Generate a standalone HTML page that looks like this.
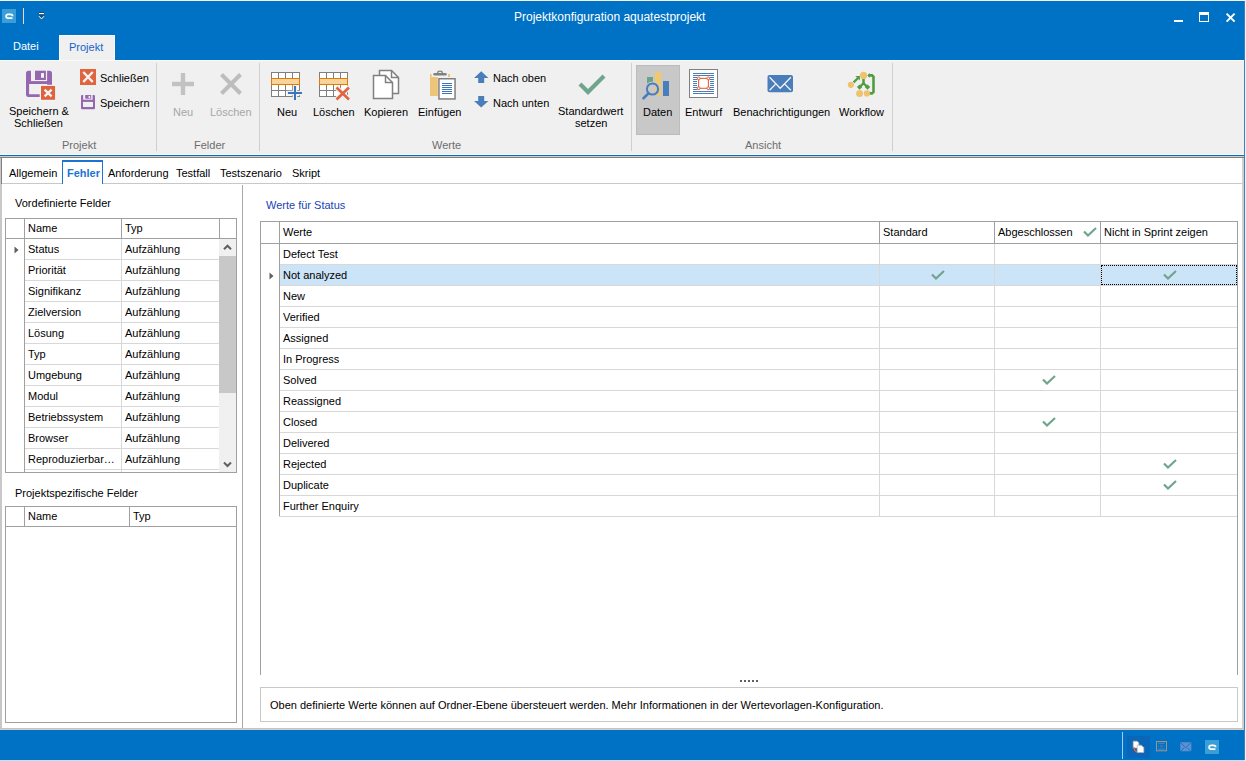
<!DOCTYPE html>
<html><head><meta charset="utf-8">
<style>
*{box-sizing:border-box}
html,body{margin:0;padding:0}
body{width:1246px;height:761px;overflow:hidden;position:relative;background:#fff;font-family:"Liberation Sans",sans-serif;font-size:11px;color:#000}
.a{position:absolute}
.t{position:absolute;white-space:nowrap;line-height:13px;font-size:11px}
.hl{position:absolute;height:1px}
.vl{position:absolute;width:1px}
svg{position:absolute;overflow:visible}
</style></head><body>
<!-- top strip -->
<div class="a" style="left:0;top:0;width:1246px;height:1px;background:#f7f2ee"></div>
<!-- title bar -->
<div class="a" style="left:0;top:1px;width:1244px;height:59px;background:#0072c6"></div>
<div class="a" style="left:2px;top:9px;width:14px;height:14px;background:#3a9fd6"></div>
<svg style="left:2px;top:9px" width="14" height="14" viewBox="0 0 14 14"><path d="M10.6 7.2 C10.6 5.6 10 5.3 8.5 5.3 H6.2 C4.8 5.3 4.1 6 4.1 7.3 C4.1 8.6 4.8 9.2 6.2 9.2 H10.4" fill="none" stroke="#fff" stroke-width="1.7"/></svg>
<div class="a" style="left:23px;top:8px;width:1px;height:16px;background:#e3dad2"></div>
<div class="a" style="left:39px;top:12px;width:5px;height:1px;background:#404040"></div>
<div class="a" style="left:39px;top:13px;width:5px;height:1px;background:#fff"></div>
<svg style="left:38px;top:15px" width="7" height="5" viewBox="0 0 7 5"><path d="M1 0H6L3.5 3Z" fill="#404040"/><path d="M1 1.2L3.5 3.9L6 1.2" fill="none" stroke="#fff" stroke-width="1"/></svg>
<div class="t" style="left:514px;top:10px;font-size:12px;line-height:14px;color:#fff">Projektkonfiguration aquatestprojekt</div>
<div class="a" style="left:1174px;top:20px;width:9px;height:2px;background:#fff"></div>
<div class="a" style="left:1199px;top:12px;width:10px;height:10px;border:1px solid #fff;border-top-width:3px"></div>
<svg style="left:1226px;top:13px" width="9" height="9" viewBox="0 0 9 9"><path d="M0.6 0.6L8.6 8.6M8.6 0.6L0.6 8.6" stroke="#fff" stroke-width="2"/></svg>
<!-- ribbon tabs -->
<div class="t" style="left:13px;top:40px;color:#fff">Datei</div>
<div class="a" style="left:59px;top:35px;width:56px;height:25px;background:#f0f0f0;border:1px solid #fcfaf7;border-bottom:none"></div>
<div class="t" style="left:69px;top:41px;color:#1464cc">Projekt</div>
<!-- ribbon body -->
<div class="a" style="left:0;top:60px;width:1244px;height:94px;background:#f0f0f0;border-top:1px solid #fcfaf7"></div>
<div class="hl" style="left:0;top:154px;width:1244px;background:#fffaf5"></div>
<div class="hl" style="left:0;top:155px;width:1244px;background:#0072c6"></div>
<div class="hl" style="left:0;top:156px;width:1244px;background:#d4d0c8"></div>
<div class="hl" style="left:0;top:157px;width:1244px;background:#808080"></div>

<!-- ===== RIBBON CONTENT ===== -->
<!-- separators -->
<div class="vl" style="left:156px;top:63px;height:88px;background:#cfcfcf"></div>
<div class="vl" style="left:259px;top:63px;height:88px;background:#cfcfcf"></div>
<div class="vl" style="left:631px;top:63px;height:88px;background:#cfcfcf"></div>
<div class="vl" style="left:892px;top:63px;height:88px;background:#cfcfcf"></div>
<!-- group labels -->
<div class="t" style="left:62px;top:139px;color:#6d6d6d">Projekt</div>
<div class="t" style="left:194px;top:139px;color:#6d6d6d">Felder</div>
<div class="t" style="left:432px;top:139px;color:#6d6d6d">Werte</div>
<div class="t" style="left:745px;top:139px;color:#6d6d6d">Ansicht</div>
<!-- Speichern & Schliessen big -->
<svg style="left:26px;top:70px" width="30" height="30" viewBox="0 0 30 30">
 <g fill="#9467b0">
  <path d="M0 3.2Q0 0.7 2.5 0.7H5V11.2H3.1V24.2H13.7V27H2.5Q0 27 0 24.5Z"/>
  <rect x="9" y="0.7" width="10.9" height="9.3"/>
  <path d="M21.1 0.7H23.5Q26 0.7 26 3.2V14.7H21.1Z"/>
  <rect x="0" y="11.1" width="26" height="2.9"/>
 </g>
 <rect x="15" y="3.1" width="3" height="4.7" fill="#f4f4f4"/>
 <rect x="14.2" y="15" width="15.6" height="15.6" fill="#f8f8f8"/>
 <rect x="15" y="15.9" width="14.1" height="13.9" fill="#de623e"/>
 <path d="M18.6 19.6L25.6 26.4M25.6 19.6L18.6 26.4" stroke="#f4f4f4" stroke-width="2.3"/>
</svg>
<div class="t" style="left:9px;top:105px">Speichern &amp;</div>
<div class="t" style="left:14px;top:117px">Schließen</div>
<!-- small Schliessen -->
<svg style="left:80px;top:69px" width="16" height="16" viewBox="0 0 16 16">
 <rect width="16" height="16" fill="#e0643f"/>
 <path d="M3.3 3L12.7 13M12.7 3L3.3 13" stroke="#f4f4f4" stroke-width="2.4"/>
</svg>
<div class="t" style="left:100px;top:72px">Schließen</div>
<!-- small Speichern -->
<svg style="left:81px;top:95px" width="14" height="15" viewBox="0 0 14 15">
 <g fill="#9467b0">
  <path d="M0 1Q0 0 1 0H2.2V4.7H2V12H12V6.9H11.6V0H13Q14 0 14 1V13.2Q14 14.2 13 14.2H1Q0 14.2 0 13.2Z"/>
  <rect x="4.2" y="0" width="6" height="3.7"/>
  <rect x="0" y="4.7" width="14" height="2.2"/>
 </g>
 <rect x="7.6" y="0.9" width="1.6" height="2.2" fill="#f4f4f4"/>
</svg>
<div class="t" style="left:100px;top:97px">Speichern</div>
<!-- Felder: Neu / Loeschen disabled -->
<svg style="left:172px;top:73px" width="22" height="22" viewBox="0 0 22 22">
 <path d="M11 0V22M0 11H22" stroke="#c2c2c2" stroke-width="4.4"/>
</svg>
<div class="t" style="left:173px;top:106px;color:#a6a6a6">Neu</div>
<svg style="left:220px;top:73px" width="22" height="22" viewBox="0 0 22 22">
 <path d="M1.5 1.5L20.5 20.5M20.5 1.5L1.5 20.5" stroke="#bdbdbd" stroke-width="4"/>
</svg>
<div class="t" style="left:210px;top:106px;color:#a6a6a6">Löschen</div>
<!-- Werte: Neu table -->
<svg style="left:271px;top:72px" width="32" height="29" viewBox="0 0 32 29">
 <g stroke="#7f7f7f" stroke-width="1" fill="#fff">
  <rect x="0.5" y="0.5" width="28" height="24"/>
 </g>
 <path d="M7.5 0.5V25M14.5 0.5V25M21.5 0.5V25M0.5 18.5H29" stroke="#7f7f7f" stroke-width="1" fill="none"/>
 <rect x="0.5" y="6.5" width="28" height="6" fill="#f8d49a" stroke="#e07b00" stroke-width="1"/>
 <path d="M24 13V29M16 21H32" stroke="#f0f0f0" stroke-width="4.5"/>
 <path d="M24 14V28M17 21H31" stroke="#3a76ba" stroke-width="2"/>
</svg>
<div class="t" style="left:277px;top:106px">Neu</div>
<!-- Werte: Loeschen table -->
<svg style="left:319px;top:72px" width="32" height="29" viewBox="0 0 32 29">
 <rect x="0.5" y="0.5" width="28" height="24" stroke="#7f7f7f" fill="#fff"/>
 <path d="M7.5 0.5V25M14.5 0.5V25M21.5 0.5V25M0.5 18.5H29" stroke="#7f7f7f" stroke-width="1" fill="none"/>
 <rect x="0.5" y="6.5" width="28" height="6" fill="#f8d49a" stroke="#e07b00" stroke-width="1"/>
 <path d="M17 15L30.5 28M30.5 15L17 28" stroke="#f0f0f0" stroke-width="5"/>
 <path d="M17.5 15.5L30 27.5M30 15.5L17.5 27.5" stroke="#e0643f" stroke-width="2.6"/>
</svg>
<div class="t" style="left:313px;top:106px">Löschen</div>
<!-- Kopieren -->
<svg style="left:372px;top:69px" width="28" height="31" viewBox="0 0 28 31">
 <path d="M7.5 1.5H19.5L26.5 8.5V24.5H7.5Z" fill="#fff" stroke="#808080" stroke-width="1.5"/>
 <path d="M19.5 1.5V8.5H26.5" fill="none" stroke="#808080" stroke-width="1.5"/>
 <path d="M1.5 6.5H13.5L20.5 13.5V29.5H1.5Z" fill="#fff" stroke="#808080" stroke-width="1.5"/>
 <path d="M13.5 6.5V13.5H20.5" fill="none" stroke="#808080" stroke-width="1.5"/>
</svg>
<div class="t" style="left:364px;top:106px">Kopieren</div>
<!-- Einfuegen -->
<svg style="left:429px;top:70px" width="29" height="31" viewBox="0 0 29 31">
 <rect x="1" y="4" width="1.6" height="22" fill="#edc579"/>
 <rect x="1" y="7" width="7.8" height="19" fill="#edc579"/>
 <rect x="19" y="4" width="2" height="3" fill="#edc579"/>
 <path d="M5.5 4.3H16.5" stroke="#808080" stroke-width="2.4" stroke-linecap="round"/>
 <ellipse cx="11" cy="2.6" rx="2.3" ry="1.4" fill="none" stroke="#808080" stroke-width="1.3"/>
 <rect x="9.95" y="8.75" width="16.1" height="20.2" fill="#fff" stroke="#808080" stroke-width="1.5"/>
 <path d="M13 13.5H23M13 15.5H23M13 17.5H23M13 19.5H23M13 21.5H23M13 23.5H23" stroke="#3a76ba" stroke-width="1"/>
</svg>
<div class="t" style="left:418px;top:106px">Einfügen</div>
<!-- Nach oben / unten -->
<svg style="left:474px;top:71px" width="15" height="13" viewBox="0 0 15 13">
 <path d="M0 7L7.2 0.3L14.4 7H10.2V12H4.2V7Z" fill="#4a7ebb"/>
</svg>
<div class="t" style="left:493px;top:72px">Nach oben</div>
<svg style="left:474px;top:95px" width="15" height="13" viewBox="0 0 15 13">
 <path d="M0 6L7.2 12.4L14.4 6H10.2V1H4.2V6Z" fill="#4a7ebb"/>
</svg>
<div class="t" style="left:493px;top:97px">Nach unten</div>
<!-- Standardwert setzen -->
<svg style="left:578px;top:73px" width="28" height="22" viewBox="0 0 28 22">
 <path d="M2 11L10 19L26 3" fill="none" stroke="#6fa58c" stroke-width="4.2"/>
</svg>
<div class="t" style="left:558px;top:105px">Standardwert</div>
<div class="t" style="left:575px;top:117px">setzen</div>
<!-- Daten (selected) -->
<div class="a" style="left:636px;top:65px;width:44px;height:70px;background:#c8c8c8;border:1px solid #bcbcbc"></div>
<svg style="left:640px;top:70px" width="32" height="32" viewBox="0 0 32 32">
 <rect x="7" y="7" width="6" height="6.5" fill="#6aa386"/>
 <rect x="15" y="2" width="6" height="24" fill="#f0c870"/>
 <rect x="23" y="11" width="6" height="15" fill="#4a7ebb"/>
 <circle cx="12.5" cy="19" r="5.7" fill="none" stroke="#c8c8c8" stroke-width="3.6"/>
 <circle cx="12.5" cy="19" r="5.6" fill="none" stroke="#4a7ebb" stroke-width="2"/>
 <path d="M8.6 23.3L3.5 28.3" stroke="#4a7ebb" stroke-width="2.6" stroke-linecap="round"/>
</svg>
<div class="t" style="left:643px;top:106px">Daten</div>
<!-- Entwurf -->
<svg style="left:689px;top:69px" width="30" height="30" viewBox="0 0 30 30">
 <rect x="0.5" y="0.5" width="28" height="28" fill="#fff" stroke="#808080" stroke-width="1"/>
 <path d="M4 4.5H25M4 6.5H25M4 8.5H25M4 10.5H25M4 12.5H25M4 14.5H25M4 16.5H25M4 18.5H25M4 20.5H25M4 22.5H25M4 24.5H25" stroke="#4a7ebb" stroke-width="1"/>
 <rect x="8" y="8" width="13" height="13" fill="#fff"/>
 <rect x="9.6" y="9.4" width="9.8" height="9.9" fill="#fff" stroke="#e0643f" stroke-width="1.1"/>
 <g fill="#fff" stroke="#e0643f" stroke-width="1"><rect x="8.3" y="8.1" width="2.6" height="2.6" rx="0.6"/><rect x="18.1" y="8.1" width="2.6" height="2.6" rx="0.6"/><rect x="8.3" y="18" width="2.6" height="2.6" rx="0.6"/><rect x="18.1" y="18" width="2.6" height="2.6" rx="0.6"/></g>
</svg>
<div class="t" style="left:685px;top:106px">Entwurf</div>
<!-- Benachrichtigungen -->
<svg style="left:767px;top:75px" width="27" height="19" viewBox="0 0 27 19">
 <rect x="0.5" y="0" width="25.5" height="17.3" rx="2" fill="#4a7ebb"/>
 <path d="M2.6 2.3L13.2 13.3L23.9 2.3M2.6 15.2L8.4 9.4M18 9.4L23.9 15.2" fill="none" stroke="#f4f4f4" stroke-width="1.3"/>
</svg>
<div class="t" style="left:733px;top:106px">Benachrichtigungen</div>
<!-- Workflow -->
<svg style="left:846px;top:70px" width="32" height="30" viewBox="0 0 32 30">
 <g stroke="#519d42" fill="none">
  <path d="M7.6 12.4L12.3 7.7" stroke-width="2.3"/>
  <path d="M17.5 8.5V14" stroke-width="2.5"/>
  <path d="M17.5 13.2L13.6 17.1M17.5 13.2L21.5 17.1" stroke-width="2.3"/>
  <path d="M22.5 5.4H26L27.5 6.9V22L26 23.4H23" stroke-width="2.6"/>
 </g>
 <g fill="#519d42">
  <path d="M13.9 6.1H9.4L13.9 10.6Z"/>
  <path d="M13.6 14.4L16.3 17.1L13.6 19.8L10.9 17.1Z"/>
  <path d="M21.5 14.4L24.2 17.1L21.5 19.8L18.8 17.1Z"/>
  <path d="M21.3 5.4L23.6 3V7.8Z"/>
 </g>
 <g fill="#efc36e">
  <circle cx="17.5" cy="5.4" r="3.6"/>
  <circle cx="4.9" cy="14.8" r="3.1"/>
  <circle cx="13.6" cy="23.4" r="3.5"/>
  <circle cx="20.9" cy="23.4" r="3.1"/>
 </g>
</svg>
<div class="t" style="left:839px;top:106px">Workflow</div>

<!-- ===== CONTENT ===== -->
<div class="a" style="left:0;top:158px;width:1244px;height:570px;background:#fff"></div>
<div class="vl" style="left:0;top:158px;height:570px;background:#c8c8c8;width:2px"></div>
<div class="vl" style="left:1px;top:157px;height:27px;background:#808080"></div>
<div class="vl" style="left:1242px;top:158px;height:570px;background:#d2d0ce;width:2px"></div>
<div class="hl" style="left:2px;top:183px;width:1240px;background:#c8c8c8"></div>
<div class="a" style="left:62px;top:160px;width:41px;height:24px;background:#fff;border:1px solid #1a75d2;border-bottom:none;border-top-width:2px"></div>
<div class="t" style="left:9px;top:167px">Allgemein</div>
<div class="t" style="left:108px;top:167px">Anforderung</div>
<div class="t" style="left:176px;top:167px">Testfall</div>
<div class="t" style="left:220px;top:167px">Testszenario</div>
<div class="t" style="left:292px;top:167px">Skript</div>
<div class="t" style="left:67px;top:167px;font-weight:bold;color:#1a75d2">Fehler</div>
<div class="vl" style="left:242px;top:185px;height:543px;background:#a8a8a8"></div>
<div class="t" style="left:15px;top:197px">Vordefinierte Felder</div>
<div class="a" style="left:5px;top:218px;width:232px;height:255px;border:1px solid #a0a0a0"></div>
<div class="hl" style="left:5px;top:238px;width:231px;background:#a0a0a0"></div>
<div class="vl" style="left:24px;top:218px;height:254px;background:#a0a0a0"></div>
<div class="vl" style="left:121px;top:218px;height:20px;background:#a0a0a0"></div>
<div class="vl" style="left:219px;top:218px;height:20px;background:#a0a0a0"></div>
<div class="vl" style="left:121px;top:239px;height:233px;background:#d8d8d8"></div>
<div class="t" style="left:28px;top:222px">Name</div>
<div class="t" style="left:125px;top:222px">Typ</div>
<div class="hl" style="left:25px;top:259px;width:194px;background:#d8d8d8"></div>
<div class="t" style="left:28px;top:243px">Status</div>
<div class="t" style="left:125px;top:243px">Aufzählung</div>
<div class="hl" style="left:25px;top:280px;width:194px;background:#d8d8d8"></div>
<div class="t" style="left:28px;top:264px">Priorität</div>
<div class="t" style="left:125px;top:264px">Aufzählung</div>
<div class="hl" style="left:25px;top:301px;width:194px;background:#d8d8d8"></div>
<div class="t" style="left:28px;top:285px">Signifikanz</div>
<div class="t" style="left:125px;top:285px">Aufzählung</div>
<div class="hl" style="left:25px;top:322px;width:194px;background:#d8d8d8"></div>
<div class="t" style="left:28px;top:306px">Zielversion</div>
<div class="t" style="left:125px;top:306px">Aufzählung</div>
<div class="hl" style="left:25px;top:343px;width:194px;background:#d8d8d8"></div>
<div class="t" style="left:28px;top:327px">Lösung</div>
<div class="t" style="left:125px;top:327px">Aufzählung</div>
<div class="hl" style="left:25px;top:364px;width:194px;background:#d8d8d8"></div>
<div class="t" style="left:28px;top:348px">Typ</div>
<div class="t" style="left:125px;top:348px">Aufzählung</div>
<div class="hl" style="left:25px;top:385px;width:194px;background:#d8d8d8"></div>
<div class="t" style="left:28px;top:369px">Umgebung</div>
<div class="t" style="left:125px;top:369px">Aufzählung</div>
<div class="hl" style="left:25px;top:406px;width:194px;background:#d8d8d8"></div>
<div class="t" style="left:28px;top:390px">Modul</div>
<div class="t" style="left:125px;top:390px">Aufzählung</div>
<div class="hl" style="left:25px;top:427px;width:194px;background:#d8d8d8"></div>
<div class="t" style="left:28px;top:411px">Betriebssystem</div>
<div class="t" style="left:125px;top:411px">Aufzählung</div>
<div class="hl" style="left:25px;top:448px;width:194px;background:#d8d8d8"></div>
<div class="t" style="left:28px;top:432px">Browser</div>
<div class="t" style="left:125px;top:432px">Aufzählung</div>
<div class="hl" style="left:25px;top:469px;width:194px;background:#d8d8d8"></div>
<div class="t" style="left:28px;top:453px">Reproduzierbar…</div>
<div class="t" style="left:125px;top:453px">Aufzählung</div>
<svg style="left:14px;top:246px" width="5" height="8" viewBox="0 0 5 8"><path d="M0.5 0.5L4.5 4L0.5 7.5Z" fill="#606060"/></svg>
<div class="a" style="left:219px;top:239px;width:17px;height:233px;background:#f0f0f0"></div>
<div class="a" style="left:219px;top:256px;width:17px;height:137px;background:#c8c8c8"></div>
<svg style="left:223px;top:244px" width="9" height="7" viewBox="0 0 9 7"><path d="M1 5.2L4.5 1.7L8 5.2" fill="none" stroke="#606060" stroke-width="2"/></svg>
<svg style="left:223px;top:461px" width="9" height="7" viewBox="0 0 9 7"><path d="M1 1.5L4.5 5L8 1.5" fill="none" stroke="#606060" stroke-width="2"/></svg>
<div class="t" style="left:15px;top:487px">Projektspezifische Felder</div>
<div class="a" style="left:5px;top:506px;width:232px;height:217px;border:1px solid #a0a0a0"></div>
<div class="hl" style="left:5px;top:526px;width:231px;background:#a0a0a0"></div>
<div class="vl" style="left:24px;top:506px;height:20px;background:#a0a0a0"></div>
<div class="vl" style="left:129px;top:506px;height:20px;background:#a0a0a0"></div>
<div class="t" style="left:28px;top:510px">Name</div>
<div class="t" style="left:133px;top:510px">Typ</div>
<div class="t" style="left:266px;top:199px;color:#2044b4">Werte für Status</div>
<div class="hl" style="left:260px;top:221px;width:978px;background:#a0a0a0"></div>
<div class="vl" style="left:260px;top:221px;height:454px;background:#a0a0a0"></div>
<div class="vl" style="left:1237px;top:221px;height:454px;background:#a0a0a0"></div>
<div class="hl" style="left:260px;top:243px;width:978px;background:#a0a0a0"></div>
<div class="vl" style="left:279px;top:221px;height:22px;background:#a0a0a0"></div>
<div class="vl" style="left:879px;top:221px;height:22px;background:#a0a0a0"></div>
<div class="vl" style="left:994px;top:221px;height:22px;background:#a0a0a0"></div>
<div class="vl" style="left:1100px;top:221px;height:22px;background:#a0a0a0"></div>
<div class="vl" style="left:279px;top:243px;height:274px;background:#a0a0a0"></div>
<div class="t" style="left:283px;top:226px">Werte</div>
<div class="t" style="left:883px;top:226px">Standard</div>
<div class="t" style="left:998px;top:226px">Abgeschlossen</div>
<div class="t" style="left:1104px;top:226px">Nicht in Sprint zeigen</div>
<svg style="left:1083px;top:227px" width="14" height="10" viewBox="0 0 14 10"><path d="M1 4.5L5 8.5L13 1" fill="none" stroke="#6fa58c" stroke-width="2.2"/></svg>
<div class="hl" style="left:280px;top:264px;width:957px;background:#d8d8d8"></div>
<div class="t" style="left:283px;top:248px">Defect Test</div>
<div class="a" style="left:280px;top:265px;width:957px;height:20px;background:#cce4f7"></div>
<svg style="left:268.5px;top:271.5px" width="5" height="8" viewBox="0 0 5 8"><path d="M0.5 0.5L4.5 4L0.5 7.5Z" fill="#606060"/></svg>
<div class="a" style="left:1101px;top:265px;width:136px;height:20px;border:1px dotted #000"></div>
<div class="hl" style="left:280px;top:285px;width:957px;background:#d8d8d8"></div>
<div class="t" style="left:283px;top:269px">Not analyzed</div>
<svg style="left:930.5px;top:270.0px" width="14" height="10" viewBox="0 0 14 10"><path d="M1 4.5L5 8.5L13 1" fill="none" stroke="#6fa58c" stroke-width="2.2"/></svg>
<svg style="left:1162.5px;top:270.0px" width="14" height="10" viewBox="0 0 14 10"><path d="M1 4.5L5 8.5L13 1" fill="none" stroke="#6fa58c" stroke-width="2.2"/></svg>
<div class="hl" style="left:280px;top:306px;width:957px;background:#d8d8d8"></div>
<div class="t" style="left:283px;top:290px">New</div>
<div class="hl" style="left:280px;top:327px;width:957px;background:#d8d8d8"></div>
<div class="t" style="left:283px;top:311px">Verified</div>
<div class="hl" style="left:280px;top:348px;width:957px;background:#d8d8d8"></div>
<div class="t" style="left:283px;top:332px">Assigned</div>
<div class="hl" style="left:280px;top:369px;width:957px;background:#d8d8d8"></div>
<div class="t" style="left:283px;top:353px">In Progress</div>
<div class="hl" style="left:280px;top:390px;width:957px;background:#d8d8d8"></div>
<div class="t" style="left:283px;top:374px">Solved</div>
<svg style="left:1041.5px;top:375.0px" width="14" height="10" viewBox="0 0 14 10"><path d="M1 4.5L5 8.5L13 1" fill="none" stroke="#6fa58c" stroke-width="2.2"/></svg>
<div class="hl" style="left:280px;top:411px;width:957px;background:#d8d8d8"></div>
<div class="t" style="left:283px;top:395px">Reassigned</div>
<div class="hl" style="left:280px;top:432px;width:957px;background:#d8d8d8"></div>
<div class="t" style="left:283px;top:416px">Closed</div>
<svg style="left:1041.5px;top:417.0px" width="14" height="10" viewBox="0 0 14 10"><path d="M1 4.5L5 8.5L13 1" fill="none" stroke="#6fa58c" stroke-width="2.2"/></svg>
<div class="hl" style="left:280px;top:453px;width:957px;background:#d8d8d8"></div>
<div class="t" style="left:283px;top:437px">Delivered</div>
<div class="hl" style="left:280px;top:474px;width:957px;background:#d8d8d8"></div>
<div class="t" style="left:283px;top:458px">Rejected</div>
<svg style="left:1162.5px;top:459.0px" width="14" height="10" viewBox="0 0 14 10"><path d="M1 4.5L5 8.5L13 1" fill="none" stroke="#6fa58c" stroke-width="2.2"/></svg>
<div class="hl" style="left:280px;top:495px;width:957px;background:#d8d8d8"></div>
<div class="t" style="left:283px;top:479px">Duplicate</div>
<svg style="left:1162.5px;top:480.0px" width="14" height="10" viewBox="0 0 14 10"><path d="M1 4.5L5 8.5L13 1" fill="none" stroke="#6fa58c" stroke-width="2.2"/></svg>
<div class="hl" style="left:280px;top:516px;width:957px;background:#d8d8d8"></div>
<div class="t" style="left:283px;top:500px">Further Enquiry</div>
<div class="vl" style="left:879px;top:244px;height:273px;background:#d8d8d8"></div>
<div class="vl" style="left:994px;top:244px;height:273px;background:#d8d8d8"></div>
<div class="vl" style="left:1100px;top:244px;height:273px;background:#d8d8d8"></div>
<div class="hl" style="left:279px;top:516px;width:958px;background:#d8d8d8"></div>
<div class="a" style="left:740px;top:680px;width:2px;height:2px;background:#606060"></div>
<div class="a" style="left:744px;top:680px;width:2px;height:2px;background:#606060"></div>
<div class="a" style="left:748px;top:680px;width:2px;height:2px;background:#606060"></div>
<div class="a" style="left:752px;top:680px;width:2px;height:2px;background:#606060"></div>
<div class="a" style="left:756px;top:680px;width:2px;height:2px;background:#606060"></div>
<div class="a" style="left:260px;top:687px;width:978px;height:35px;border:1px solid #c8c8c8"></div>
<div class="t" style="left:270px;top:699px">Oben definierte Werte können auf Ordner-Ebene übersteuert werden. Mehr Informationen in der Wertevorlagen-Konfiguration.</div>
<div class="hl" style="left:0;top:728px;width:1244px;background:#c6c4c2"></div>
<div class="hl" style="left:0;top:729px;width:1244px;background:#d8d0c8"></div>
<div class="a" style="left:0;top:730px;width:1244px;height:30px;background:#0072c6"></div>
<div class="hl" style="left:0;top:760px;width:1246px;background:#c8e0f0"></div>
<div class="vl" style="left:1122px;top:732px;height:27px;background:#a8cdef"></div>
<div class="a" style="left:1127px;top:736px;width:23px;height:22px;background:#0a66b8"></div>
<svg style="left:1132px;top:740px" width="14" height="14" viewBox="0 0 14 14"><path d="M1.2 1.2H5.2L6.8 2.8V8H1.2Z" fill="#fff" stroke="#b8b0a8" stroke-width="0.7"/><path d="M5.2 5.2H9.4L11.8 7.6V12.5H5.2Z" fill="#fff" stroke="#b8b0a8" stroke-width="0.7"/><path d="M2 7.5Q2 11 5 12" fill="none" stroke="#e0643f" stroke-width="1.1"/><path d="M1 8.5L2 6.8L3 8.5Z" fill="#e0643f"/></svg>
<svg style="left:1156px;top:741px" width="12" height="11" viewBox="0 0 12 11"><rect x="0.5" y="0.5" width="10" height="9.3" fill="none" stroke="#a0948a" stroke-width="1"/><path d="M2.2 2.3H8.8M2.2 8.2H8.8" stroke="#5a8ccc" stroke-width="0.8"/><path d="M4.3 4.2L6.7 6.6M6.7 4.2L4.3 6.6" stroke="#e0643f" stroke-width="0.9" stroke-dasharray="0.9 0.5"/><path d="M2.2 5.4H2.9M8.1 5.4H8.8" stroke="#5a8ccc" stroke-width="0.8"/></svg>
<svg style="left:1180px;top:742px" width="12" height="10" viewBox="0 0 12 10"><rect x="0.3" y="0.3" width="11" height="9" rx="1" fill="#5f8fce"/><path d="M1 1L5.7 6L10.5 1M1 9L4 6M7.5 6L10.5 9" fill="none" stroke="#0072c6" stroke-width="0.8"/></svg>
<div class="a" style="left:1205px;top:740px;width:14px;height:14px;background:#3a9fd6"></div>
<svg style="left:1205px;top:740px" width="14" height="14" viewBox="0 0 14 14"><path d="M10.6 7.2 C10.6 5.6 10 5.3 8.5 5.3 H6.2 C4.8 5.3 4.1 6 4.1 7.3 C4.1 8.6 4.8 9.2 6.2 9.2 H10.4" fill="none" stroke="#fff" stroke-width="1.7"/></svg>
<!-- window right border -->
<div class="vl" style="left:1244px;top:1px;height:759px;background:#3c7fc8"></div>
<div class="vl" style="left:1245px;top:0;height:761px;background:#f4f0ec"></div>
</body></html>
